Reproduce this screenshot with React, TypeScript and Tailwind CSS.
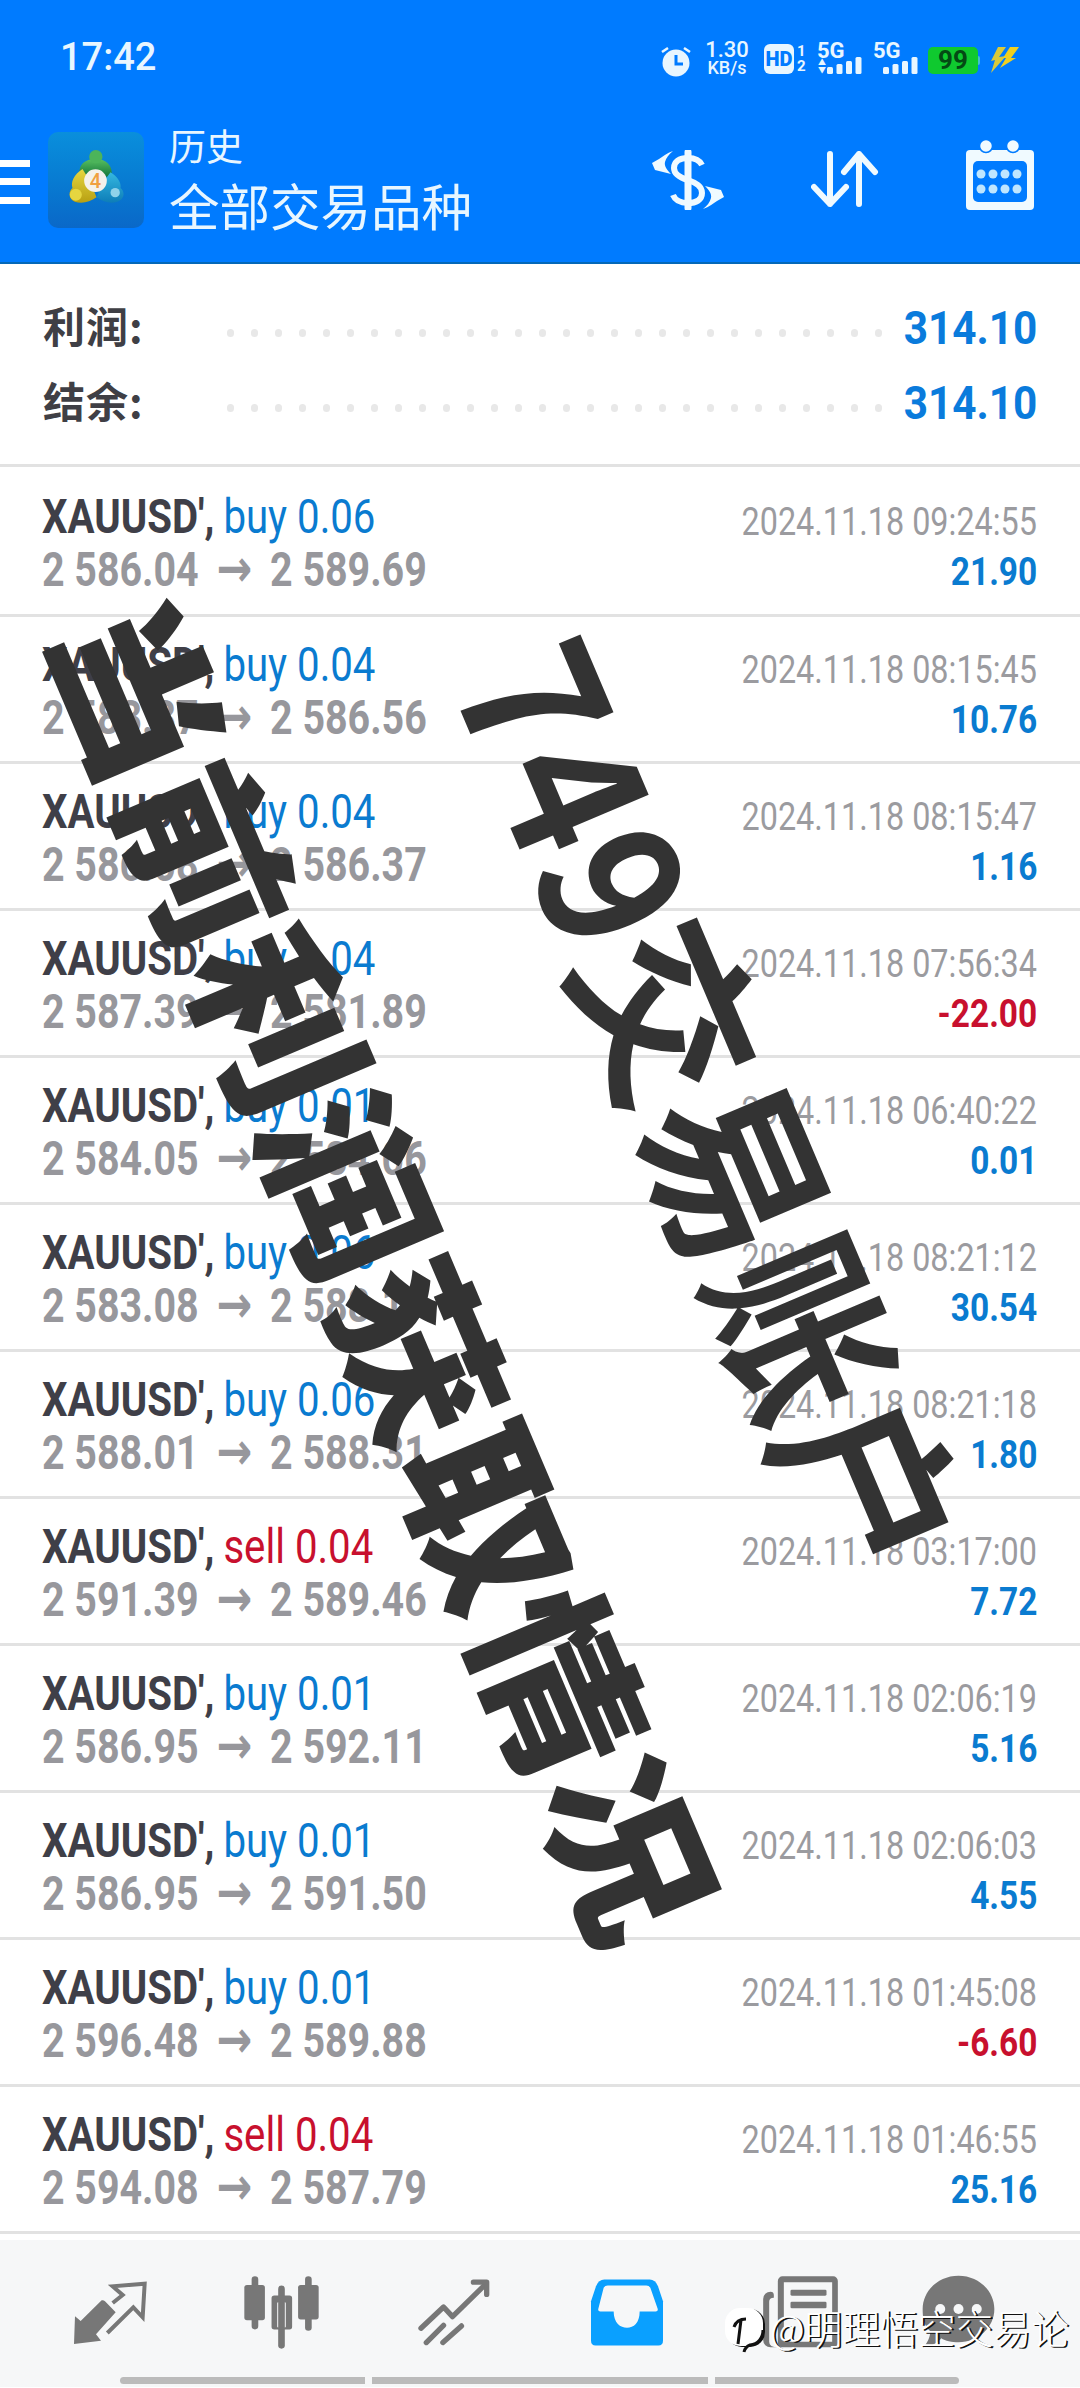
type Trade = {
  side: string;
  lot: string;
  from: string;
  to: string;
  time: string;
  profit: string;
};

const TRADES: Trade[] = [
  { side: "buy", lot: "0.06", from: "2 586.04", to: "2 589.69", time: "2024.11.18 09:24:55", profit: "21.90" },
  { side: "buy", lot: "0.04", from: "2 583.87", to: "2 586.56", time: "2024.11.18 08:15:45", profit: "10.76" },
  { side: "buy", lot: "0.04", from: "2 586.08", to: "2 586.37", time: "2024.11.18 08:15:47", profit: "1.16" },
  { side: "buy", lot: "0.04", from: "2 587.39", to: "2 581.89", time: "2024.11.18 07:56:34", profit: "-22.00" },
  { side: "buy", lot: "0.01", from: "2 584.05", to: "2 584.06", time: "2024.11.18 06:40:22", profit: "0.01" },
  { side: "buy", lot: "0.06", from: "2 583.08", to: "2 588.17", time: "2024.11.18 08:21:12", profit: "30.54" },
  { side: "buy", lot: "0.06", from: "2 588.01", to: "2 588.31", time: "2024.11.18 08:21:18", profit: "1.80" },
  { side: "sell", lot: "0.04", from: "2 591.39", to: "2 589.46", time: "2024.11.18 03:17:00", profit: "7.72" },
  { side: "buy", lot: "0.01", from: "2 586.95", to: "2 592.11", time: "2024.11.18 02:06:19", profit: "5.16" },
  { side: "buy", lot: "0.01", from: "2 586.95", to: "2 591.50", time: "2024.11.18 02:06:03", profit: "4.55" },
  { side: "buy", lot: "0.01", from: "2 596.48", to: "2 589.88", time: "2024.11.18 01:45:08", profit: "-6.60" },
  { side: "sell", lot: "0.04", from: "2 594.08", to: "2 587.79", time: "2024.11.18 01:46:55", profit: "25.16" },
];

function Bars() {
  return (
    <svg width="36" height="17" viewBox="0 0 36 17" fill="#e8f6ff">
      <rect x="0" y="10" width="6" height="7" rx="1.5" />
      <rect x="9.5" y="7" width="6" height="10" rx="1.5" />
      <rect x="19" y="4" width="6" height="13" rx="1.5" />
      <rect x="28.5" y="0" width="6" height="17" rx="1.5" />
    </svg>
  );
}

function StatusBar() {
  return (
    <div className="h-[112px] flex justify-between pl-[60px] pr-[60px] pt-[40px] text-[#e8f6ff]">
      <span className="text-[38px] leading-[34px] font-medium">17:42</span>
      <div className="flex items-start h-[40px]">
        <svg width="32" height="32" viewBox="0 0 32 32" className="mt-[5px]">
          <circle cx="16" cy="18" r="13.5" fill="#e8f6ff" />
          <path d="M16 10v9h7" fill="none" stroke="#007bff" strokeWidth="3" />
          <path d="M2 7l6-4M30 7l-6-4" stroke="#e8f6ff" strokeWidth="2.5" />
        </svg>
        <div className="ml-[12px] w-[46px] flex flex-col items-center font-medium">
          <span className="text-[22px] leading-[20px]">1.30</span>
          <span className="text-[18px] leading-[16px]">KB/s</span>
        </div>
        <div className="ml-[14px] w-[30px] h-[30px] mt-[4px] bg-[#e8f6ff] rounded-[6px] text-[#007bff] text-[20px] leading-[30px] font-black text-center">
          HD
        </div>
        <div className="ml-[3px] w-[10px] flex flex-col text-[15px] leading-[15px] font-bold mt-[4px]">
          <span>1</span>
          <span>2</span>
        </div>
        <div className="ml-[10px] w-[46px] relative h-[34px]">
          <span className="absolute left-0 top-[2px] text-[22px] leading-[17px] font-bold">5G</span>
          <span className="absolute left-[1px] top-[19px] text-[8px] leading-[8px]">▲</span>
          <span className="absolute left-[1px] top-[27px] text-[8px] leading-[8px]">▼</span>
          <span className="absolute left-[10px] top-[17px]"><Bars /></span>
        </div>
        <div className="ml-[10px] w-[46px] relative h-[34px]">
          <span className="absolute left-0 top-[2px] text-[22px] leading-[17px] font-bold">5G</span>
          <span className="absolute left-[10px] top-[17px]"><Bars /></span>
        </div>
        <div className="ml-[9px] w-[50px] h-[27px] mt-[7px] bg-[#0fc92f] rounded-[5px] text-[#044a14] text-[26px] leading-[27px] font-bold text-center">
          99
        </div>
        <div className="w-[2px] h-[9px] mt-[16px] bg-[#3fc0d0] rounded-r-sm" />
        <svg width="30" height="28" viewBox="0 0 30 28" className="ml-[10px] mt-[6px]">
          <path d="M8 1h8L9 11l7-1L1 27l4-13-4 1z" fill="#d9c93a" />
          <path d="M20 1h9L21 12l5 0L10 22l6-10-3 0z" fill="#f0d020" />
        </svg>
      </div>
    </div>
  );
}

function MtLogo() {
  return (
    <div className="w-[96px] h-[96px] rounded-[10px] bg-gradient-to-b from-[#0a8fdc] to-[#0a68c8] ml-[18px] flex items-center justify-center">
      <svg width="57" height="54" viewBox="205 148 170 162" className="-mt-[6px]">
        <defs>
          <linearGradient id="mtGreen" x1="0" y1="0" x2="0" y2="1">
            <stop offset="0" stopColor="#58c060" />
            <stop offset="1" stopColor="#14763a" />
          </linearGradient>
          <linearGradient id="mtYellow" x1="0" y1="0" x2="0" y2="1">
            <stop offset="0" stopColor="#e6d640" />
            <stop offset="1" stopColor="#b8a012" />
          </linearGradient>
          <linearGradient id="mtBlue" x1="0" y1="0" x2="0" y2="1">
            <stop offset="0" stopColor="#35b8e0" />
            <stop offset="1" stopColor="#0d7db8" />
          </linearGradient>
        </defs>
        <path d="M240 228C233 192 255 175 288 175c32 0 52 20 47 53z" fill="url(#mtGreen)" />
        <circle cx="288" cy="168" r="20" fill="#4cb45a" />
        <path d="M248 205C222 222 212 245 218 262c-13 10-13 33 7 41 20 7 45 2 65-13l-20-50z" fill="url(#mtYellow)" />
        <path d="M332 215c20 13 33 30 30 47 16 13 10 36-10 41-17 7-42 2-62-13l20-45z" fill="url(#mtBlue)" />
        <circle cx="228" cy="282" r="18" fill="#e6d640" />
        <circle cx="346" cy="276" r="14" fill="#8fd2ea" />
        <circle cx="287" cy="240" r="34" fill="#f4f1ea" />
        <text x="287" y="262" textAnchor="middle" fontSize="60" fontWeight="500" fill="#f0a040" fontFamily="Roboto">4</text>
      </svg>
    </div>
  );
}

function AppBar() {
  return (
    <div className="h-[152px] flex items-start pt-[20px] border-b-[2px] border-b-[#0568b8]">
      <div className="relative w-[30px] h-[96px]">
        <div className="absolute left-0 top-[28px] w-[30px] h-[7px] bg-white" />
        <div className="absolute left-0 top-[46px] w-[30px] h-[7px] bg-white" />
        <div className="absolute left-0 top-[65px] w-[30px] h-[7px] bg-white" />
      </div>
      <MtLogo />
      <div className="ml-[25px] flex flex-col text-[#e8f6ff] font-['Noto_Sans_CJK_SC',sans-serif]">
        <span className="text-[37px] leading-[44px] -mt-[9px]">历史</span>
        <span className="text-[50.5px] leading-[60px] mt-[7px] whitespace-nowrap">全部交易品种</span>
      </div>
      <div className="ml-auto flex items-center">
        {/* currency exchange */}
        <svg width="72" height="60" viewBox="0 0 72 60" className="mt-[18px]">
          <path d="M50 15C47 9 42 8 36 8 27 8 22 12 22 18c0 7 7 10 14 12 8 3 14 6 14 13 0 7-6 10-14 10-8 0-13-3-15-8" fill="none" stroke="#f0faff" strokeWidth="6" />
          <path d="M36 2v56" fill="none" stroke="#f0faff" strokeWidth="7" strokeLinecap="round" />
          <path d="M21 1C15 3 10 7 7 9L0 13l3 7 16 4c-4-4-7-8-6-12 1-4 4-8 8-11z" fill="#f0faff" />
          <path d="M21 1C15 3 10 7 7 9L0 13l3 7 16 4c-4-4-7-8-6-12 1-4 4-8 8-11z" fill="#f0faff" transform="rotate(180 36 30)" />
        </svg>
        {/* sort arrows */}
        <svg width="68" height="56" viewBox="0 0 68 56" className="ml-[87px] mt-[16px]" fill="none" stroke="#f0faff" strokeWidth="6" strokeLinecap="round" strokeLinejoin="round">
          <path d="M19 3v50M3 36l16 17 16-17" />
          <path d="M48 53V3M33 21L48 3l16 18" />
        </svg>
        {/* calendar */}
        <svg width="70" height="70" viewBox="0 0 70 70" className="ml-[86px] mr-[45px] mt-[8px]">
          <path d="M5 10h60a4 4 0 0 1 4 4v52a4 4 0 0 1-4 4H5a4 4 0 0 1-4-4V14a4 4 0 0 1 4-4z" fill="#f0faff" />
          <path d="M13 21h44a5 5 0 0 1 5 5v31a5 5 0 0 1-5 5H13a5 5 0 0 1-5-5V26a5 5 0 0 1 5-5z" fill="#007bff" />
          <circle cx="21" cy="6" r="6.5" fill="#f0faff" stroke="#007bff" strokeWidth="1.5" />
          <circle cx="48" cy="6" r="6.5" fill="#f0faff" stroke="#007bff" strokeWidth="1.5" />
          {[16, 28, 40, 52].map((cx) => (
            <g key={cx} fill="#bfe6ff">
              <circle cx={cx} cy="34" r="4.5" />
              <circle cx={cx} cy="49" r="4.5" />
            </g>
          ))}
        </svg>
      </div>
    </div>
  );
}

function SummaryRow({ label }: { label: string }) {
  return (
    <div className="h-[75px] flex items-center">
      <span className="w-[184px] text-[42px] leading-[44px] -mt-[6px] tracking-[1px] font-bold text-[#3f3f45] font-['Noto_Sans_CJK_SC',sans-serif]">{label}</span>
      <div className="flex gap-[17px] mt-[10px]">
        {Array.from({ length: 28 }).map((_, i) => (
          <span key={i} className="w-[7px] h-[8px] rounded-full bg-[#e8e8e8]" />
        ))}
      </div>
      <span className="ml-auto text-[46px] leading-[48px] font-bold text-[#0a7bdc] origin-right scale-x-[0.92]">314.10</span>
    </div>
  );
}

function TradeRow({ t, first }: { t: Trade; first: boolean }) {
  const sideColor = t.side === "buy" ? "text-[#0a7bd0]" : "text-[#c8102e]";
  const profitColor = t.profit.startsWith("-") ? "text-[#c8102e]" : "text-[#0a7bd0]";
  return (
    <div className={`border-b-[3px] border-b-[#e2e2e2] pl-[42px] pr-[43px] flex justify-between ${first ? "h-[150px] pt-[25px]" : "h-[147px] pt-[23px]"}`}>
      <div className="flex flex-col whitespace-nowrap origin-left scale-x-[0.82]">
        <div className="text-[49px] leading-[50px]">
          <span className="font-bold text-[#3f3f48]">XAUUSD',</span>
          <span className={`ml-[11px] ${sideColor}`}>{t.side} {t.lot}</span>
        </div>
        <div className="text-[48px] leading-[50px] font-bold text-[#97979c]">
          {t.from}
          <span className="inline-block w-[87px] text-center font-['DejaVu_Sans',sans-serif] text-[52px] leading-none">→</span>
          {t.to}
        </div>
      </div>
      <div className="flex flex-col items-end whitespace-nowrap pt-[7px]">
        <span className="text-[39px] leading-[46px] text-[#9b9b9f] origin-right scale-x-[0.83]">{t.time}</span>
        <span className={`text-[38px] leading-[44px] mt-[5px] font-bold origin-right scale-x-[0.88] ${profitColor}`}>{t.profit}</span>
      </div>
    </div>
  );
}

function NavIcons() {
  return (
    <div className="h-[137px] relative">
      <svg width="76" height="68" viewBox="66 60 228 204" className="absolute left-[72px] top-[39px]">
        <path d="M72 255L75 172l17 14 63-62q5-2 10 3l32 33-59 66 15 19z" fill="#777" />
        <path d="M172 222l78-77 28 30 6-101-96 8 30 26-30 24" fill="none" stroke="#777" strokeWidth="12" />
      </svg>
      <svg width="79" height="75" viewBox="576 48 236 226" className="absolute left-[242px] top-[35px]" fill="#777">
        <rect x="604" y="52" width="20" height="160" rx="10" />
        <rect x="582" y="78" width="62" height="106" rx="8" />
        <rect x="684" y="80" width="20" height="190" rx="10" />
        <path d="M672 110h46a8 8 0 0 1 8 8v86a8 8 0 0 1-8 8h-46a8 8 0 0 1-8-8v-86a8 8 0 0 1 8-8zm12 20a3 3 0 0 0-3 3v70a3 3 0 0 0 3 3h20a3 3 0 0 0 3-3v-70a3 3 0 0 0-3-3z" fillRule="evenodd" />
        <rect x="765" y="52" width="20" height="164" rx="10" />
        <rect x="744" y="78" width="62" height="104" rx="8" />
      </svg>
      <svg width="73" height="68" viewBox="1100 56 220 204" className="absolute left-[417px] top-[38px]" fill="none" stroke="#777" strokeWidth="16" strokeLinecap="round" strokeLinejoin="round">
        <path d="M1112 207l68-64 27 29 100-98" />
        <path d="M1270 68h40v37" />
        <path d="M1128 250l52-52M1178 250l56-50" strokeLinecap="round" />
      </svg>
      <svg width="76" height="69" viewBox="56 56 228 206" className="absolute left-[589px] top-[38px]">
        <path d="M102 60H238q17 0 25 20L278 125V244q0 14-14 14H76q-14 0-14-14V125L77 80q8-20 25-20z" fill="#0aa0ff" />
        <path d="M112 78H228q8 0 12 7L262 148q2 8-6 8H208c0 34-18 49-38 49s-40-15-40-49H90q-8 0-6-8L100 85q4-7 12-7z" fill="#f6f7f8" />
      </svg>
      <svg width="79" height="74" viewBox="572 48 236 222" className="absolute left-[761px] top-[35px]" fill="#777">
        <path d="M636 52H788a14 14 0 0 1 14 14V251a14 14 0 0 1-14 14H636a14 14 0 0 1-14-14V66a14 14 0 0 1 14-14zm4 18V248H785V70z" fillRule="evenodd" />
        <rect x="660" y="92" width="108" height="18" rx="4" />
        <rect x="660" y="128" width="108" height="20" rx="4" />
        <path d="M600 98a10 10 0 0 1 10 10v8q-14 0-14 12V248q0 17 26 17H600a22 22 0 0 1-22-22V120a22 22 0 0 1 22-22z" />
      </svg>
      <svg width="75" height="74" viewBox="1052 48 226 222" className="absolute left-[921px] top-[35px]" fill="#777">
        <path d="M1165 50c60 0 108 45 108 100s-48 100-108 100c-20 0-40-4-52-12-8 12-30 25-55 27 12-10 22-30 22-48-20-18-23-40-23-67 0-55 48-100 108-100z" />
        <circle cx="1110" cy="150" r="15" fill="#f6f7f8" />
        <circle cx="1165" cy="150" r="15" fill="#f6f7f8" />
        <circle cx="1220" cy="150" r="15" fill="#f6f7f8" />
      </svg>
    </div>
  );
}

export default function App() {
  return (
    <div className="relative w-[1080px] h-[2388px] overflow-hidden bg-white font-['Roboto','Noto_Sans_CJK_SC',sans-serif]">
      <div className="bg-[#007bff]">
        <StatusBar />
        <AppBar />
      </div>

      <div className="h-[203px] px-[43px] pt-[26px] border-b-[3px] border-b-[#e2e2e2]">
        <SummaryRow label="利润:" />
        <SummaryRow label="结余:" />
      </div>

      {TRADES.map((t, i) => (
        <TradeRow key={t.time} t={t} first={i === 0} />
      ))}

      <div className="mt-[6px] h-[147px] bg-[#f6f7f8]">
        <NavIcons />
        <div className="flex gap-[7px] pl-[120px]">
          <div className="w-[245px] h-[7px] rounded-l-full bg-[#bbbbbb]" />
          <div className="w-[336px] h-[7px] bg-[#bbbbbb]" />
          <div className="w-[244px] h-[7px] rounded-r-full bg-[#bbbbbb]" />
        </div>
      </div>

      {/* text pasted over the screenshot */}
      <div className="absolute left-[185px] top-[571px] origin-top-left rotate-[67deg] scale-x-[1.09] whitespace-nowrap text-[165px] leading-[165px] font-black text-[#333] font-['Noto_Sans_CJK_SC',sans-serif]">
        当前利润获取情况
      </div>
      <div className="absolute left-[611px] top-[612px] origin-top-left rotate-[67deg] scale-y-[1.1] whitespace-nowrap text-[172px] leading-[172px] font-bold text-[#333] font-['Noto_Sans_CJK_SC',sans-serif]">
        749交易账户
      </div>

      {/* watermark */}
      <div className="absolute left-[725px] top-[2305px] flex items-center">
        <div className="relative w-[38px] h-[38px] rounded-[15px] bg-white shadow-[2px_1px_0_#111]">
          <svg width="38" height="46" viewBox="0 0 38 46" fill="none" stroke="#111" strokeWidth="3" className="absolute left-0 top-0">
            <path d="M9 19c2-6 6-8 12-8M16 12c-1 8-2 16-3 24" />
            <path d="M38 22c0 8-5 14-13 15-3 1-5 3-6 7" />
          </svg>
        </div>
        <span className="ml-[7px] text-[40px] leading-[44px] text-white font-['Noto_Sans_CJK_SC',sans-serif] font-light [text-shadow:2px_1px_0_#111] whitespace-nowrap origin-left scale-x-[0.945]">
          @明理悟空交易论
        </span>
      </div>
    </div>
  );
}
